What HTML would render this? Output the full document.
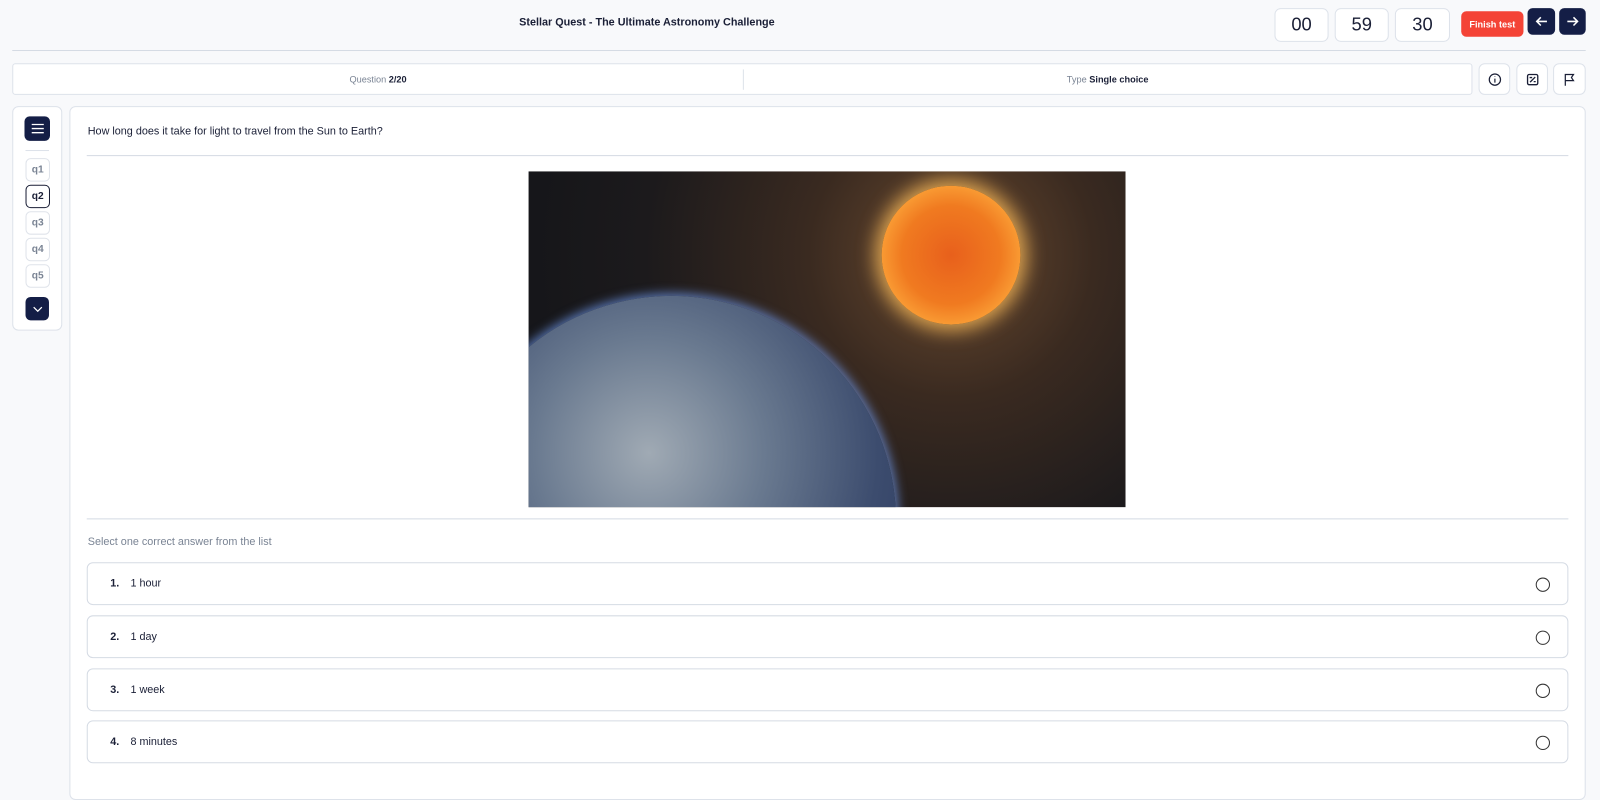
<!DOCTYPE html>
<html><head><style>
*{box-sizing:border-box;margin:0;padding:0}
body{width:1600px;height:774px;overflow:hidden;background:#f8f9fb;font-family:"Liberation Sans",sans-serif;color:#1a1f36;position:relative}
#w{position:absolute;left:0;top:0;width:1568px;height:760px;transform:scale(1.02041);transform-origin:0 0}
.a{position:absolute}
.box{background:#fff;border:1px solid #dde2ea;border-radius:6px}
.t{font-size:18px;display:flex;align-items:center;justify-content:center}
.nav{background:#141e46;border-radius:5px;color:#fff;display:flex;align-items:center;justify-content:center}
.q{left:25px;width:24px;height:23px;border:1px solid #dfe3ea;border-radius:5px;font-size:10px;color:#7a8494;display:flex;align-items:center;justify-content:center;font-weight:bold;background:#fff}
.ans{left:85px;width:1452px;height:42px;background:#fff;border:1px solid #d5dbe4;border-radius:6px;font-size:10.6px;display:flex;align-items:center;padding-left:22px}
.ans b{margin-right:11px}
.ans i{position:absolute;right:17px;top:14px;width:14px;height:14px;border:1.3px solid #333;border-radius:50%}
</style></head><body><div id="w">
<div class="a" style="left:0;top:16px;width:1268px;text-align:center;font-size:10.6px;font-weight:bold">Stellar Quest - The Ultimate Astronomy Challenge</div>
<div class="a box t" style="left:1249px;top:8px;width:53px;height:33px">00</div>
<div class="a box t" style="left:1308px;top:8px;width:53px;height:33px">59</div>
<div class="a box t" style="left:1367px;top:8px;width:54px;height:33px">30</div>
<div class="a" style="left:1432px;top:11px;width:61px;height:25px;background:#f44336;border-radius:5px;color:#fff;font-size:9px;font-weight:bold;display:flex;align-items:center;justify-content:center">Finish test</div>
<div class="a nav" style="left:1497px;top:8px;width:27px;height:26px"><svg width="14" height="14" viewBox="0 0 14 14" fill="none" stroke="#fff" stroke-width="1.5"><path d="M12 7H2M6 3L2 7l4 4"/></svg></div>
<div class="a nav" style="left:1528px;top:8px;width:26px;height:26px"><svg width="14" height="14" viewBox="0 0 14 14" fill="none" stroke="#fff" stroke-width="1.5"><path d="M2 7h10M8 3l4 4-4 4"/></svg></div>
<div class="a" style="left:12px;top:49px;width:1542px;height:1px;background:#d5dbe4"></div>
<div class="a box" style="left:12px;top:62px;width:1431px;height:31px;border-radius:3px;font-size:9px;color:#7a8494">
<div class="a" style="left:0;top:10px;width:715px;text-align:center">Question <b style="color:#1a1f36">2/20</b></div>
<div class="a" style="left:715px;top:5px;width:1px;height:20px;background:#dde2ea"></div>
<div class="a" style="left:715px;top:10px;width:715px;text-align:center">Type <b style="color:#1a1f36">Single choice</b></div>
</div>
<div class="a box t" style="left:1449px;top:62px;width:31px;height:31px"><svg width="14" height="14" viewBox="0 0 14 14" fill="none" stroke="#1a1f36" stroke-width="1.2"><circle cx="7" cy="7" r="5.5"/><path d="M7 6v4M7 4v.5"/></svg></div>
<div class="a box t" style="left:1486px;top:62px;width:31px;height:31px"><svg width="14" height="14" viewBox="0 0 14 14" fill="none" stroke="#1a1f36" stroke-width="1.3"><rect x="2" y="2" width="10" height="10" rx="1.5"/><path d="M4.5 9.5l5-5M4 5h2.5M8 9h2"/></svg></div>
<div class="a box t" style="left:1522px;top:62px;width:32px;height:31px"><svg width="14" height="14" viewBox="0 0 14 14" fill="none" stroke="#1a1f36" stroke-width="1.2"><path d="M3 13V2h8l-2 3 2 3H3"/></svg></div>
<div class="a box" style="left:12px;top:104px;width:49px;height:220px"></div>
<div class="a nav" style="left:24px;top:114px;width:25px;height:24px"><svg width="12" height="10" viewBox="0 0 12 10" stroke="#fff" stroke-width="1.3"><path d="M0 1h12M0 5h12M0 9h12"/></svg></div>
<div class="a" style="left:25px;top:147px;width:23px;height:1px;background:#dde2ea"></div>
<div class="a q" style="top:155px">q1</div>
<div class="a q" style="top:181px;border-color:#1a1f36;color:#1a1f36">q2</div>
<div class="a q" style="top:207px">q3</div>
<div class="a q" style="top:233px">q4</div>
<div class="a q" style="top:259px">q5</div>
<div class="a nav" style="left:25px;top:291px;width:23px;height:23px"><svg width="10" height="6" viewBox="0 0 10 6" fill="none" stroke="#fff" stroke-width="1.2"><path d="M1 1l4 4 4-4"/></svg></div>
<div class="a box" style="left:68px;top:104px;width:1486px;height:680px;border-radius:6px"></div>
<div class="a" style="left:86px;top:123px;font-size:10.6px">How long does it take for light to travel from the Sun to Earth?</div>
<div class="a" style="left:85px;top:152px;width:1452px;height:1px;background:#d5dbe4"></div>
<div class="a" style="left:518px;top:168px;width:585px;height:329px;overflow:hidden;background:radial-gradient(circle at 414px 82px,#6a4a30 0,#3a2a20 140px,#1c1a1c 300px,#111318 500px)">
<div class="a" style="left:346px;top:14px;width:136px;height:136px;border-radius:50%;background:radial-gradient(circle,#e8601c 0,#f07a20 50%,#ffb040 85%,#ffe8a0 100%);box-shadow:0 0 18px 6px rgba(255,190,90,.8)"></div>
<div class="a" style="left:-80px;top:122px;width:440px;height:440px;border-radius:50%;background:radial-gradient(circle at 45% 35%,#a0aab4 0,#6a7a90 30%,#3c4c6e 60%,#26345a 90%);box-shadow:0 0 10px 3px rgba(110,150,230,.7)"></div>
</div>
<div class="a" style="left:85px;top:508px;width:1452px;height:1px;background:#d5dbe4"></div>
<div class="a" style="left:86px;top:525px;font-size:10.6px;color:#7a8494">Select one correct answer from the list</div>
<div class="a ans" style="top:551px"><b>1.</b>1 hour<i></i></div>
<div class="a ans" style="top:603px"><b>2.</b>1 day<i></i></div>
<div class="a ans" style="top:655px"><b>3.</b>1 week<i></i></div>
<div class="a ans" style="top:706px"><b>4.</b>8 minutes<i></i></div>
</div></body></html>
